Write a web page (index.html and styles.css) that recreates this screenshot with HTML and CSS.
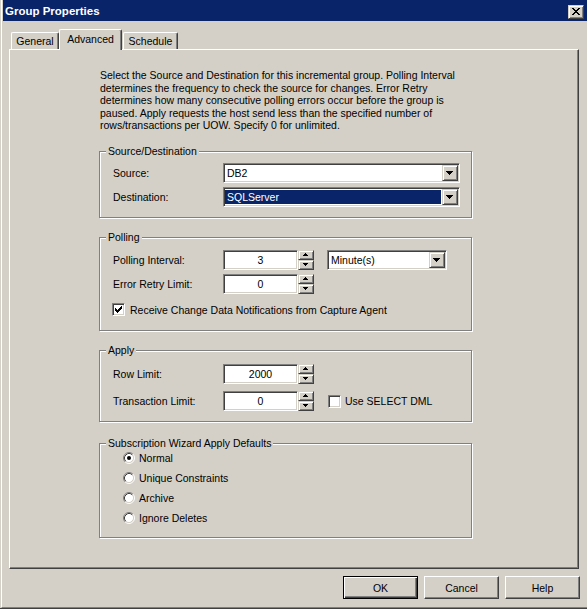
FILE: index.html
```html
<!DOCTYPE html>
<html>
<head>
<meta charset="utf-8">
<title>Group Properties</title>
<link rel="stylesheet" href="styles.css">
</head>
<body>
<div class="window">
  <div class="frame">
    <div class="titlebar">
      <span class="title">Group Properties</span>
      <span class="close"><svg width="8" height="7" viewBox="0 0 8 7" shape-rendering="crispEdges"><path fill="#000" d="M0 0h2v1H0zM6 0h2v1H6zM1 1h2v1H1zM5 1h2v1H5zM2 2h4v1H2zM3 3h2v1H3zM2 4h4v1H2zM1 5h2v1H1zM5 5h2v1H5zM0 6h2v1H0zM6 6h2v1H6z"/></svg></span>
    </div>

    <div class="tabs">
      <div class="tab tab-general">General</div>
      <div class="tab tab-active">Advanced</div>
      <div class="tab tab-schedule">Schedule</div>
    </div>

    <div class="panel">
      <p class="desc">Select the Source and Destination for this incremental group. Polling Interval<br>determines the frequency to check the source for changes. Error Retry<br>determines how many consecutive polling errors occur before the group is<br>paused. Apply requests the host send less than the specified number of<br>rows/transactions per UOW. Specify 0 for unlimited.</p>

      <div class="group g-src">
        <span class="legend">Source/Destination</span>
        <div class="row">
          <span class="label">Source:</span>
          <div class="combo combo-wide"><span class="combo-text">DB2</span><span class="dd"><svg width="7" height="4" viewBox="0 0 7 4" shape-rendering="crispEdges"><path fill="#000" d="M0 0h7v1H0zM1 1h5v1H1zM2 2h3v1H2zM3 3h1v1H3z"/></svg></span></div>
        </div>
        <div class="row">
          <span class="label">Destination:</span>
          <div class="combo combo-wide combo-sel"><span class="combo-text">SQLServer</span><span class="dd"><svg width="7" height="4" viewBox="0 0 7 4" shape-rendering="crispEdges"><path fill="#000" d="M0 0h7v1H0zM1 1h5v1H1zM2 2h3v1H2zM3 3h1v1H3z"/></svg></span></div>
        </div>
      </div>

      <div class="group g-poll">
        <span class="legend">Polling</span>
        <div class="row">
          <span class="label">Polling Interval:</span>
          <span class="edit">3</span>
          <span class="spin">
            <span class="spin-btn"><svg width="5" height="3" viewBox="0 0 5 3" shape-rendering="crispEdges"><path fill="#000" d="M2 0h1v1H2zM1 1h3v1H1zM0 2h5v1H0z"/></svg></span>
            <span class="spin-btn"><svg width="5" height="3" viewBox="0 0 5 3" shape-rendering="crispEdges"><path fill="#000" d="M0 0h5v1H0zM1 1h3v1H1zM2 2h1v1H2z"/></svg></span>
          </span>
          <div class="combo combo-unit"><span class="combo-text">Minute(s)</span><span class="dd"><svg width="7" height="4" viewBox="0 0 7 4" shape-rendering="crispEdges"><path fill="#000" d="M0 0h7v1H0zM1 1h5v1H1zM2 2h3v1H2zM3 3h1v1H3z"/></svg></span></div>
        </div>
        <div class="row">
          <span class="label">Error Retry Limit:</span>
          <span class="edit">0</span>
          <span class="spin">
            <span class="spin-btn"><svg width="5" height="3" viewBox="0 0 5 3" shape-rendering="crispEdges"><path fill="#000" d="M2 0h1v1H2zM1 1h3v1H1zM0 2h5v1H0z"/></svg></span>
            <span class="spin-btn"><svg width="5" height="3" viewBox="0 0 5 3" shape-rendering="crispEdges"><path fill="#000" d="M0 0h5v1H0zM1 1h3v1H1zM2 2h1v1H2z"/></svg></span>
          </span>
        </div>
        <div class="check-row">
          <span class="checkbox"><svg width="7" height="7" viewBox="0 0 7 7" shape-rendering="crispEdges"><path fill="#000" d="M6 0h1v1H6zM5 1h2v1H5zM0 2h1v1H0zM4 2h3v1H4zM0 3h2v1H0zM3 3h3v1H3zM0 4h5v1H0zM1 5h3v1H1zM2 6h1v1H2z"/></svg></span>
          <span class="check-label">Receive Change Data Notifications from Capture Agent</span>
        </div>
      </div>

      <div class="group g-apply">
        <span class="legend">Apply</span>
        <div class="row">
          <span class="label">Row Limit:</span>
          <span class="edit">2000</span>
          <span class="spin">
            <span class="spin-btn"><svg width="5" height="3" viewBox="0 0 5 3" shape-rendering="crispEdges"><path fill="#000" d="M2 0h1v1H2zM1 1h3v1H1zM0 2h5v1H0z"/></svg></span>
            <span class="spin-btn"><svg width="5" height="3" viewBox="0 0 5 3" shape-rendering="crispEdges"><path fill="#000" d="M0 0h5v1H0zM1 1h3v1H1zM2 2h1v1H2z"/></svg></span>
          </span>
        </div>
        <div class="row">
          <span class="label">Transaction Limit:</span>
          <span class="edit">0</span>
          <span class="spin">
            <span class="spin-btn"><svg width="5" height="3" viewBox="0 0 5 3" shape-rendering="crispEdges"><path fill="#000" d="M2 0h1v1H2zM1 1h3v1H1zM0 2h5v1H0z"/></svg></span>
            <span class="spin-btn"><svg width="5" height="3" viewBox="0 0 5 3" shape-rendering="crispEdges"><path fill="#000" d="M0 0h5v1H0zM1 1h3v1H1zM2 2h1v1H2z"/></svg></span>
          </span>
          <span class="checkbox checkbox-dml"></span>
          <span class="check-label">Use SELECT DML</span>
        </div>
      </div>

      <div class="group g-sub">
        <span class="legend">Subscription Wizard Apply Defaults</span>
        <div class="radio-row">
          <svg class="radio" width="12" height="12" viewBox="0 0 12 12"><circle cx="6" cy="6" r="4.5" fill="#fff"/><path d="M2.11 9.89A5.5 5.5 0 0 1 9.89 2.11" fill="none" stroke="#808080"/><path d="M9.89 2.11A5.5 5.5 0 0 1 2.11 9.89" fill="none" stroke="#fff"/><path d="M2.82 9.18A4.5 4.5 0 0 1 9.18 2.82" fill="none" stroke="#404040"/><path d="M9.18 2.82A4.5 4.5 0 0 1 2.82 9.18" fill="none" stroke="#d4d0c8"/><circle cx="6" cy="6" r="2" fill="#000"/></svg>
          <span class="radio-label">Normal</span>
        </div>
        <div class="radio-row">
          <svg class="radio" width="12" height="12" viewBox="0 0 12 12"><circle cx="6" cy="6" r="4.5" fill="#fff"/><path d="M2.11 9.89A5.5 5.5 0 0 1 9.89 2.11" fill="none" stroke="#808080"/><path d="M9.89 2.11A5.5 5.5 0 0 1 2.11 9.89" fill="none" stroke="#fff"/><path d="M2.82 9.18A4.5 4.5 0 0 1 9.18 2.82" fill="none" stroke="#404040"/><path d="M9.18 2.82A4.5 4.5 0 0 1 2.82 9.18" fill="none" stroke="#d4d0c8"/></svg>
          <span class="radio-label">Unique Constraints</span>
        </div>
        <div class="radio-row">
          <svg class="radio" width="12" height="12" viewBox="0 0 12 12"><circle cx="6" cy="6" r="4.5" fill="#fff"/><path d="M2.11 9.89A5.5 5.5 0 0 1 9.89 2.11" fill="none" stroke="#808080"/><path d="M9.89 2.11A5.5 5.5 0 0 1 2.11 9.89" fill="none" stroke="#fff"/><path d="M2.82 9.18A4.5 4.5 0 0 1 9.18 2.82" fill="none" stroke="#404040"/><path d="M9.18 2.82A4.5 4.5 0 0 1 2.82 9.18" fill="none" stroke="#d4d0c8"/></svg>
          <span class="radio-label">Archive</span>
        </div>
        <div class="radio-row">
          <svg class="radio" width="12" height="12" viewBox="0 0 12 12"><circle cx="6" cy="6" r="4.5" fill="#fff"/><path d="M2.11 9.89A5.5 5.5 0 0 1 9.89 2.11" fill="none" stroke="#808080"/><path d="M9.89 2.11A5.5 5.5 0 0 1 2.11 9.89" fill="none" stroke="#fff"/><path d="M2.82 9.18A4.5 4.5 0 0 1 9.18 2.82" fill="none" stroke="#404040"/><path d="M9.18 2.82A4.5 4.5 0 0 1 2.82 9.18" fill="none" stroke="#d4d0c8"/></svg>
          <span class="radio-label">Ignore Deletes</span>
        </div>
      </div>
    </div>

    <div class="buttons">
      <span class="btn btn-default">OK</span>
      <span class="btn">Cancel</span>
      <span class="btn">Help</span>
    </div>
  </div>
</div>
</body>
</html>
```

FILE: styles.css
```css
* { box-sizing: border-box; }
html, body { margin: 0; padding: 0; }
body {
  background: #d4d0c8;
  font-family: "Liberation Sans", Arial, sans-serif;
  font-size: 10.5px;
  color: #000;
}
svg { display: block; }

.window {
  width: 587px;
  height: 609px;
  padding-left: 1px;
  border-bottom: 1px solid #404040;
  background: #d4d0c8;
  overflow: hidden;
}
.frame {
  height: 608px;
  border-left: 1px solid #fff;
  border-bottom: 1px solid #808080;
  display: flex;
  flex-direction: column;
}
.frame > * { flex: none; }

/* title bar */
.titlebar {
  height: 21px;
  margin-left: 1px;
  background: #0a246a;
  display: flex;
  align-items: center;
  justify-content: space-between;
  padding: 0 3px 0 2px;
}
.title {
  color: #fff;
  font-weight: bold;
  font-size: 11.5px;
}
.close {
  align-self: flex-start;
  margin-top: 5px;
  width: 16px;
  height: 14px;
  display: flex;
  padding: 2px 0 0 3px;
  background: #d4d0c8;
  border: 1px solid;
  border-color: #d4d0c8 #404040 #404040 #d4d0c8;
  box-shadow: inset 1px 1px #fff, inset -1px -1px #808080;
}

/* tabs */
.tabs {
  height: 20px;
  margin-top: 8px;
  padding-left: 9px;
  display: flex;
  align-items: flex-end;
}
.tab {
  height: 17px;
  border-top: 1px solid #fff;
  border-left: 1px solid #fff;
  border-right: 1px solid #404040;
  border-radius: 2px 2px 0 0;
  box-shadow: inset -1px 0 #808080;
  display: flex;
  align-items: center;
  justify-content: center;
  background: #d4d0c8;
}
.tab-general { width: 48px; }
.tab-active {
  width: 63px;
  height: 21px;
  margin-bottom: -1px;
  position: relative;
  z-index: 1;
  padding-bottom: 2px;
}
.tab-schedule { width: 55px; margin-left: 1px; }

/* panel */
.panel {
  margin-left: 7px;
  width: 570px;
  height: 520px;
  border-top: 1px solid #fff;
  border-left: 1px solid #fff;
  border-right: 1px solid #404040;
  border-bottom: 1px solid #404040;
  box-shadow: inset -1px -1px #808080;
  padding: 19px 0 0 89px;
}
.desc {
  margin: 0 0 0 1px;
  height: 63px;
  line-height: 12.5px;
  white-space: nowrap;
}

/* group boxes */
.group {
  position: relative;
  width: 373px;
  border: 1px solid #808080;
  box-shadow: inset 1px 1px #fff, 1px 1px #fff;
  padding-left: 13px;
}
.legend {
  position: absolute;
  top: -7px;
  left: 6px;
  padding: 0 2px;
  line-height: 13px;
  background: #d4d0c8;
}
.g-src { margin-top: 19px; height: 67px; padding-top: 11px; }
.g-poll { margin-top: 19px; height: 94px; padding-top: 12px; }
.g-apply { margin-top: 19px; height: 72px; padding-top: 13px; }
.g-sub { margin-top: 21px; height: 95px; padding-top: 4px; }

.row {
  display: flex;
  align-items: center;
  height: 20px;
}
.row + .row { margin-top: 4px; }
.g-apply .row + .row { margin-top: 7px; }
.label { width: 110px; flex: none; }

/* sunken controls */
.combo, .edit, .checkbox {
  background: #fff;
  border: 1px solid;
  border-color: #808080 #fff #fff #808080;
  box-shadow: inset 1px 1px #404040, inset -1px -1px #d4d0c8;
}
.combo {
  height: 20px;
  padding: 1px;
  display: flex;
  flex: none;
}
.combo-wide { width: 237px; }
.combo-unit { width: 120px; margin-left: 13px; }
.combo-text {
  flex: 1;
  line-height: 16px;
  padding-left: 2px;
  white-space: nowrap;
}
.combo-sel .combo-text {
  background: #0a246a;
  color: #fff;
  margin: 1px 1px 1px 0;
  line-height: 14px;
  padding-left: 2px;
}
.dd, .spin-btn {
  display: block;
  background: #d4d0c8;
  border: 1px solid;
  border-color: #d4d0c8 #404040 #404040 #d4d0c8;
  box-shadow: inset 1px 1px #fff, inset -1px -1px #808080;
}
.dd {
  width: 16px;
  height: 16px;
  flex: none;
  padding: 5px 0 0 3px;
}
.edit {
  width: 75px;
  height: 20px;
  flex: none;
  padding: 1px;
  line-height: 16px;
  text-align: center;
}
.spin {
  display: flex;
  flex-direction: column;
  width: 16px;
  height: 20px;
  flex: none;
}
.spin-btn {
  width: 16px;
  height: 10px;
  padding: 2px 0 0 4px;
}

/* checkboxes */
.checkbox {
  width: 13px;
  height: 13px;
  flex: none;
  padding: 2px;
}
.check-row {
  display: flex;
  align-items: center;
  height: 13px;
  margin-top: 9px;
  margin-left: -1px;
}
.check-row .check-label { margin-left: 5px; }
.checkbox-dml { margin-left: 14px; }
.checkbox-dml + .check-label { margin-left: 4px; }

/* radios */
.radio-row {
  display: flex;
  align-items: center;
  height: 20px;
  padding-left: 10px;
}
.radio { flex: none; }
.radio-label { margin-left: 4px; }

/* buttons */
.buttons {
  display: flex;
  justify-content: flex-end;
  gap: 6px;
  margin-top: 7px;
  padding-right: 7px;
}
.btn {
  width: 75px;
  height: 23px;
  display: flex;
  align-items: center;
  justify-content: center;
  background: #d4d0c8;
  border: 1px solid;
  border-color: #fff #404040 #404040 #fff;
  box-shadow: inset -1px -1px #808080;
}
.btn-default {
  border-color: #000;
  box-shadow: inset 1px 1px #fff, inset -1px -1px #404040, inset -2px -2px #808080;
}
```
